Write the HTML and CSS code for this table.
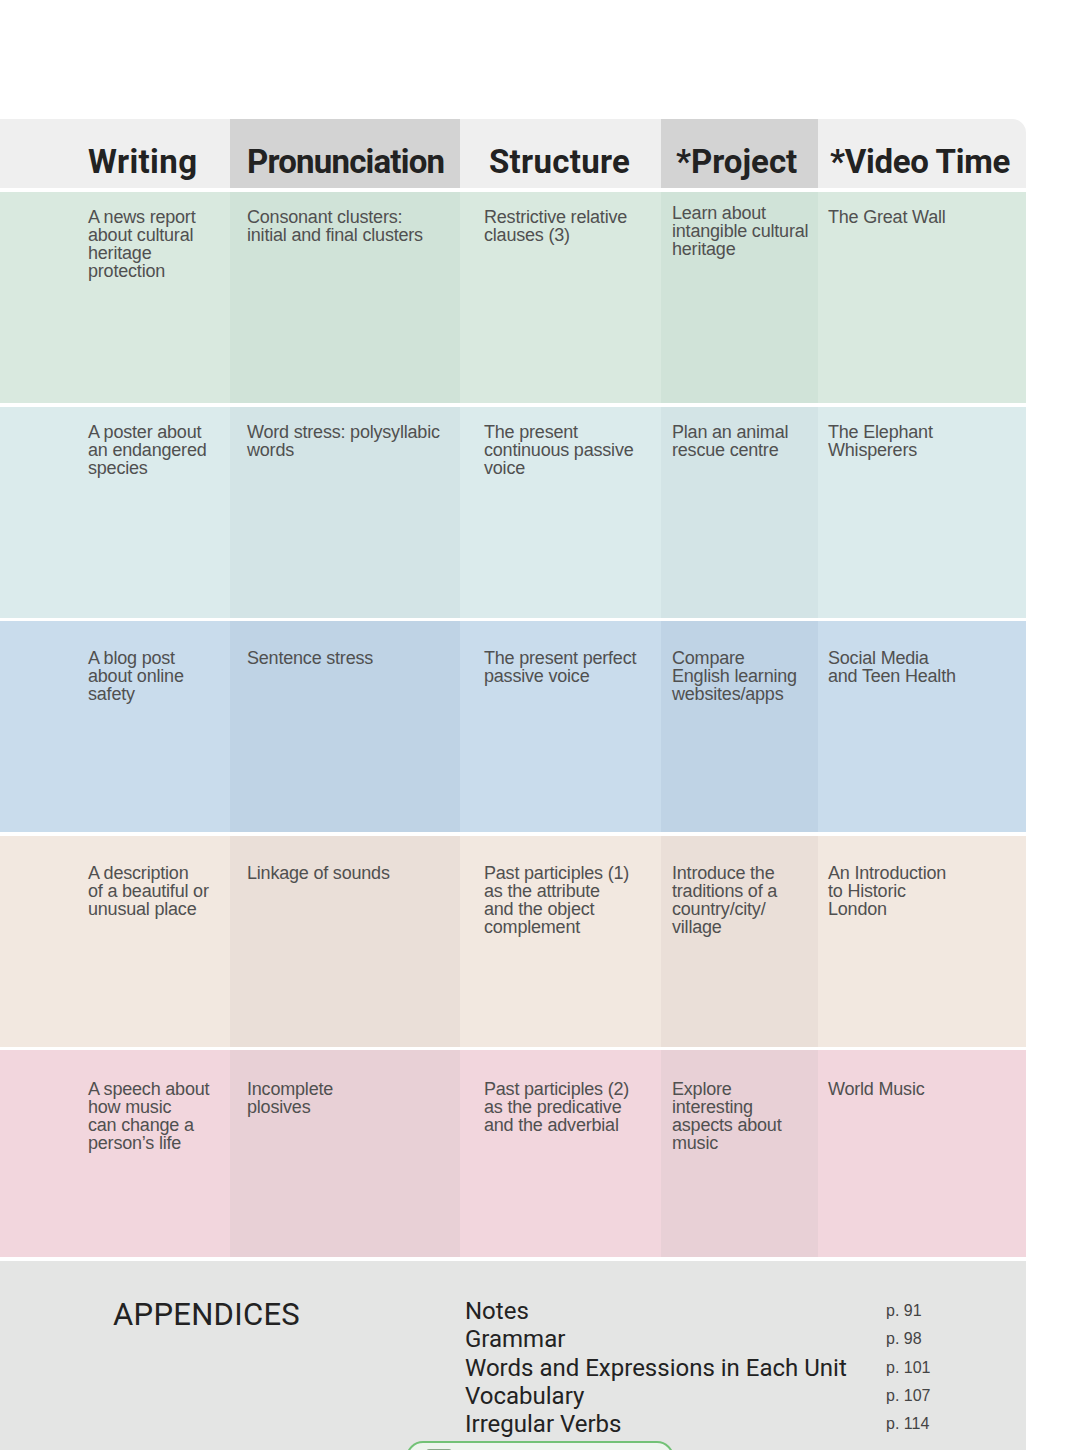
FILE: index.html
```html
<!DOCTYPE html>
<html lang="en">
<head>
<meta charset="utf-8">
<title>Contents</title>
<link rel="stylesheet" href="styles.css">
</head>
<body>
<div class="page">
  <div class="toc">
    <div class="row head">
      <div class="hc c0">Writing</div>
      <div class="hc c1 dark">Pronunciation</div>
      <div class="hc c2">Structure</div>
      <div class="hc c3 dark">*Project</div>
      <div class="hc c4">*Video Time</div>
    </div>
    <div class="row r1">
      <div class="cell c0">A news report<br>about cultural<br>heritage<br>protection</div>
      <div class="cell c1 dark">Consonant clusters:<br>initial and final clusters</div>
      <div class="cell c2">Restrictive relative<br>clauses (3)</div>
      <div class="cell c3 dark up">Learn about<br>intangible cultural<br>heritage</div>
      <div class="cell c4">The Great Wall</div>
    </div>
    <div class="row r2">
      <div class="cell c0">A poster about<br>an endangered<br>species</div>
      <div class="cell c1 dark">Word stress: polysyllabic<br>words</div>
      <div class="cell c2">The present<br>continuous passive<br>voice</div>
      <div class="cell c3 dark">Plan an animal<br>rescue centre</div>
      <div class="cell c4">The Elephant<br>Whisperers</div>
    </div>
    <div class="row r3 low">
      <div class="cell c0">A blog post<br>about online<br>safety</div>
      <div class="cell c1 dark">Sentence stress</div>
      <div class="cell c2">The present perfect<br>passive voice</div>
      <div class="cell c3 dark">Compare<br>English learning<br>websites/apps</div>
      <div class="cell c4">Social Media<br>and Teen Health</div>
    </div>
    <div class="row r4 low">
      <div class="cell c0">A description<br>of a beautiful or<br>unusual place</div>
      <div class="cell c1 dark">Linkage of sounds</div>
      <div class="cell c2">Past participles (1)<br>as the attribute<br>and the object<br>complement</div>
      <div class="cell c3 dark">Introduce the<br>traditions of a<br>country/city/<br>village</div>
      <div class="cell c4">An Introduction<br>to Historic<br>London</div>
    </div>
    <div class="row r5 low last">
      <div class="cell c0">A speech about<br>how music<br>can change a<br>person’s life</div>
      <div class="cell c1 dark">Incomplete<br>plosives</div>
      <div class="cell c2">Past participles (2)<br>as the predicative<br>and the adverbial</div>
      <div class="cell c3 dark">Explore<br>interesting<br>aspects about<br>music</div>
      <div class="cell c4">World Music</div>
    </div>
  </div>
  <div class="appendices">
    <div class="app-title">APPENDICES</div>
    <div class="app-list">
      <span class="app-name">Notes</span><span class="app-page">p. 91</span>
      <span class="app-name">Grammar</span><span class="app-page">p. 98</span>
      <span class="app-name">Words and Expressions in Each Unit</span><span class="app-page">p. 101</span>
      <span class="app-name">Vocabulary</span><span class="app-page">p. 107</span>
      <span class="app-name">Irregular Verbs</span><span class="app-page">p. 114</span>
    </div>
  </div>
  <div class="pill">
    <svg class="pill-icon" width="26" height="18" viewBox="0 0 26 18"><rect x="1" y="1" width="24" height="16" rx="2" fill="none" stroke="#6a8f6a" stroke-width="1.6"/><line x1="5" y1="6" x2="21" y2="6" stroke="#6a8f6a" stroke-width="1.4"/><line x1="5" y1="10" x2="21" y2="10" stroke="#6a8f6a" stroke-width="1.4"/></svg>
    <span class="pill-text">长按识别查看全部目录</span>
  </div>
</div>
</body>
</html>
```

FILE: styles.css
```css
html, body {
  margin: 0;
  padding: 0;
  background: #ffffff;
}
body {
  width: 1080px;
  height: 1450px;
  overflow: hidden;
}
.page {
  position: relative;
  padding-top: 119px;
}
.toc {
  width: 1026px;
  display: flex;
  flex-direction: column;
  gap: 3.5px;
  border-top-right-radius: 14px;
  overflow: hidden;
  background: #ffffff;
}
.row {
  display: grid;
  grid-template-columns: 230px 230px 201px 157px 208px;
  height: 211px;
}
.row.head {
  height: 69px;
  margin-bottom: 0.5px;
  background: #efefef;
}
.row.last {
  height: 207px;
}
.hc {
  font-family: Roboto, "Liberation Sans", sans-serif;
  font-weight: 700;
  font-size: 33px;
  line-height: 40px;
  color: #222222;
  padding-top: 23px;
  white-space: nowrap;
}
.hc.dark { background: #d3d3d3; }
.hc.c0 { padding-left: 88px; letter-spacing: 0.4px; }
.hc.c1 { padding-left: 17px; letter-spacing: -0.8px; }
.hc.c2 { padding-left: 29px; letter-spacing: 0.3px; }
.hc.c3 { padding-left: 15px; }
.hc.c4 { padding-left: 12px; letter-spacing: -0.3px; }

.cell {
  font-family: "Liberation Sans", Arial, sans-serif;
  font-size: 18px;
  line-height: 18px;
  letter-spacing: -0.2px;
  color: #505050;
  padding-top: 16px;
  white-space: nowrap;
}
.low .cell { padding-top: 28px; }
.r5 .cell { padding-top: 30px; }
.cell.up { padding-top: 12px; }
.cell.c0 { padding-left: 88px; }
.cell.c1 { padding-left: 17px; }
.cell.c2 { padding-left: 24px; }
.cell.c3 { padding-left: 11px; }
.cell.c4 { padding-left: 10px; }

.r1 { background: #d9e9df; }
.r1 .dark { background: #d0e3d8; }
.r2 { background: #dbebec; }
.r2 .dark { background: #d3e4e6; }
.r3 { background: #c9dcec; }
.r3 .dark { background: #bfd3e5; }
.r4 { background: #f2e8e0; }
.r4 .dark { background: #eadfd8; }
.r5 { background: #f2d6dd; }
.r5 .dark { background: #e8d0d6; }

.appendices {
  margin-top: 4px;
  width: 1026px;
  height: 200px;
  background: #e4e5e4;
  display: flex;
  padding-top: 36px;
  box-sizing: border-box;
}
.app-title {
  font-family: Roboto, "Liberation Sans", sans-serif;
  font-size: 31px;
  line-height: 36px;
  color: #222222;
  padding-left: 113px;
  width: 465px;
  flex: none;
  box-sizing: border-box;
  letter-spacing: 0.3px;
}
.app-list {
  display: grid;
  grid-template-columns: 421px auto;
  grid-auto-rows: 28.3px;
  align-items: start;
}
.app-name {
  font-family: Roboto, "Liberation Sans", sans-serif;
  font-size: 24px;
  line-height: 28.3px;
  color: #222222;
  white-space: nowrap;
}
.app-page {
  font-family: "Liberation Sans", Arial, sans-serif;
  font-size: 16px;
  line-height: 22px;
  padding-top: 3px;
  color: #444444;
}
.pill {
  position: absolute;
  left: 406px;
  top: 1441px;
  width: 268px;
  height: 34px;
  box-sizing: border-box;
  border: 2px solid #72c276;
  border-radius: 17px;
  background: #eef4ee;
  display: flex;
  align-items: center;
  gap: 8px;
  padding-left: 18px;
}
.pill-icon { flex: none; }
.pill-text {
  font-family: "Noto Sans CJK SC", sans-serif;
  font-size: 17px;
  color: #555555;
}
```
